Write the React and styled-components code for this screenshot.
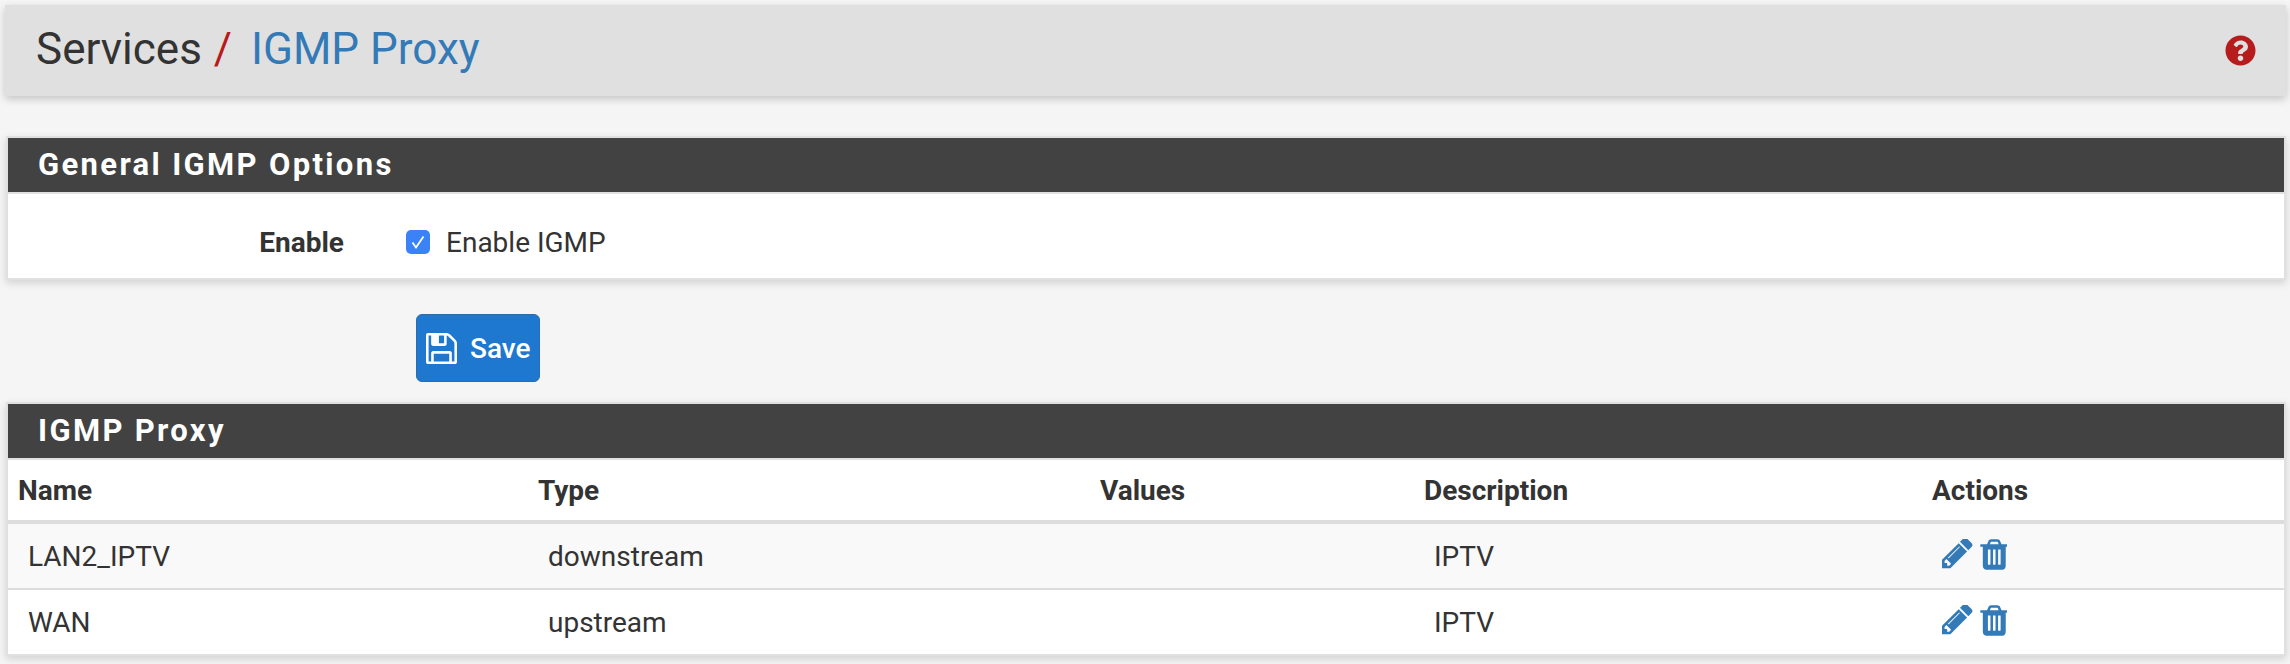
import React from "react";
import styled, { createGlobalStyle } from "styled-components";
import { FaQuestionCircle } from "react-icons/fa";

const GlobalStyle = createGlobalStyle`
  html, body {
    margin: 0;
    background: #f5f5f5;
    font-family: Roboto, "Liberation Sans", sans-serif;
    color: #333;
  }
`;

const Page = styled.div`
  width: 2290px;
  height: 664px;
  padding: 5px 4px 0 5px;
  box-sizing: border-box;
  overflow: hidden;
`;

const Header = styled.div`
  display: flex;
  align-items: center;
  justify-content: space-between;
  height: 91px;
  padding: 0 30px 0 31px;
  background: #e0e0e0;
  box-shadow: 0 3px 8px rgba(0, 0, 0, 0.2);
`;

const Crumbs = styled.h1`
  margin: 0 0 3px;
  font-size: 44px;
  font-weight: 400;
  display: flex;
  gap: 12px;
`;

const Slash = styled.span`
  color: #b71c1c;
`;

const CrumbLink = styled.span`
  color: #337ab7;
  margin-left: 7px;
`;

const HelpIcon = styled(FaQuestionCircle)`
  color: #b71c1c;
  font-size: 31px;
  display: block;
`;

const Panel = styled.section`
  background: #fff;
  border: 2px solid #e0e0e0;
  box-shadow: 0 3px 8px rgba(0, 0, 0, 0.15);
  margin: ${(p) => p.$top}px 0 0 1px;
`;

const PanelHeading = styled.h2`
  margin: 0;
  height: 54px;
  line-height: 54px;
  padding-left: 30px;
  background: #424242;
  color: #fff;
  font-size: 31px;
  font-weight: 700;
  letter-spacing: 2.35px;
  border-bottom: 2px solid #e0e0e0;
`;

const FormRow = styled.div`
  display: flex;
  align-items: center;
  height: 84px;
  padding-top: 12px;
  box-sizing: border-box;
`;

const FormLabel = styled.label`
  width: 336px;
  text-align: right;
  font-size: 28px;
  font-weight: 700;
`;

const CheckLabel = styled.label`
  display: flex;
  align-items: center;
  margin-left: 62px;
  gap: 16px;
  font-size: 28px;
`;

const CheckBox = styled.span`
  width: 24px;
  height: 24px;
  border-radius: 5px;
  background: #3b82f6;
  display: flex;
  align-items: center;
  justify-content: center;
`;

const SaveRow = styled.div`
  padding: 34px 0 0 411px;
`;

const SaveButton = styled.button`
  display: flex;
  align-items: center;
  gap: 13px;
  width: 124px;
  height: 68px;
  padding: 0 0 0 9px;
  box-sizing: border-box;
  background: #1e78d0;
  border: 1px solid #2d6ca8;
  border-radius: 6px;
  color: #fff;
  font-family: inherit;
  font-size: 28px;
  font-weight: 500;
`;

const Table = styled.table`
  width: 100%;
  border-collapse: collapse;
  table-layout: fixed;
`;

const Th = styled.th`
  width: ${(p) => p.$w}px;
  box-sizing: border-box;
  height: 62px;
  padding: 0 0 0 10px;
  text-align: left;
  font-size: 28px;
  font-weight: 700;
  border-bottom: 4px solid #ddd;
`;

const Td = styled.td`
  height: 64px;
  padding: 0 0 0 20px;
  font-size: 28px;
  background: ${(p) => (p.$odd ? "#f9f9f9" : "#fff")};
  border-bottom: ${(p) => (p.$last ? "none" : "2px solid #ddd")};
`;

const Actions = styled.div`
  display: flex;
  align-items: center;
  gap: 6px;
  color: #337ab7;
  margin-top: -4px;
`;

function SaveIcon() {
  return (
    <svg width="31" height="31" viewBox="128 128 1536 1536" fill="currentColor">
      <path d="M512 1536h768v-384h-768v384zm896 0h128v-896q0-14-10-38.500t-20-34.500l-281-281q-10-10-34-20t-39-10v416q0 40-28 68t-68 28h-576q-40 0-68-28t-28-68v-416h-128v1280h128v-416q0-40 28-68t68-28h832q40 0 68 28t28 68v416zm-384-928v-320q0-13-9.500-22.500t-22.500-9.500h-192q-13 0-22.500 9.500t-9.500 22.500v320q0 13 9.500 22.500t22.500 9.500h192q13 0 22.500-9.500t9.500-22.500zm640 32v928q0 40-28 68t-68 28h-1344q-40 0-68-28t-28-68v-1344q0-40 28-68t68-28h928q40 0 88 20t76 48l280 280q28 28 48 76t20 88z" />
    </svg>
  );
}

function PencilIcon() {
  return (
    <svg width="31" height="30" viewBox="128 250 1543 1414" fill="currentColor">
      <path d="M491 1536l91-91-235-235-91 91v107h128v128h107zm523-928q0-22-22-22-10 0-17 7l-542 542q-7 7-7 17 0 22 22 22 10 0 17-7l542-542q7-7 7-17zm-54-192l416 416-832 832h-416v-416zm683 96q0 53-37 90l-166 166-416-416 166-165q36-38 90-38 53 0 91 38l235 234q37 39 37 91z" />
    </svg>
  );
}

function TrashIcon() {
  return (
    <svg width="28" height="31" viewBox="128 128 1408 1536" fill="currentColor">
      <path d="M704 1376v-704q0-14-9-23t-23-9h-64q-14 0-23 9t-9 23v704q0 14 9 23t23 9h64q14 0 23-9t9-23zm256 0v-704q0-14-9-23t-23-9h-64q-14 0-23 9t-9 23v704q0 14 9 23t23 9h64q14 0 23-9t9-23zm256 0v-704q0-14-9-23t-23-9h-64q-14 0-23 9t-9 23v704q0 14 9 23t23 9h64q14 0 23-9t9-23zm-544-992h448l-48-117q-7-9-17-11h-317q-10 2-17 11zm928 32v64q0 14-9 23t-23 9h-96v948q0 83-47 143.500t-113 60.500h-832q-66 0-113-58.500t-47-141.500v-952h-96q-14 0-23-9t-9-23v-64q0-14 9-23t23-9h309l70-167q15-37 54-63t79-26h320q40 0 79 26t54 63l70 167h309q14 0 23 9t9 23z" />
    </svg>
  );
}

const columns = [
  { label: "Name", w: 520 },
  { label: "Type", w: 562 },
  { label: "Values", w: 324 },
  { label: "Description", w: 508 },
  { label: "Actions" },
];

const rows = [
  { name: "LAN2_IPTV", type: "downstream", desc: "IPTV" },
  { name: "WAN", type: "upstream", desc: "IPTV" },
];

export default function App() {
  return (
    <Page>
      <GlobalStyle />
      <Header>
        <Crumbs>
          <span>Services</span>
          <Slash>/</Slash>
          <CrumbLink>IGMP Proxy</CrumbLink>
        </Crumbs>
        <HelpIcon />
      </Header>

      <Panel $top={40}>
        <PanelHeading>General IGMP Options</PanelHeading>
        <FormRow>
          <FormLabel>Enable</FormLabel>
          <CheckLabel>
            <CheckBox>
              <svg width="16" height="16" viewBox="0 0 16 16" fill="none">
                <path d="M2.500 8.500l3.500 5L13.500 2.500" stroke="#fff" strokeWidth="1.800" />
              </svg>
            </CheckBox>
            Enable IGMP
          </CheckLabel>
        </FormRow>
      </Panel>

      <SaveRow>
        <SaveButton>
          <SaveIcon />
          Save
        </SaveButton>
      </SaveRow>

      <Panel $top={20}>
        <PanelHeading>IGMP Proxy</PanelHeading>
        <Table>
          <thead>
            <tr>
              {columns.map((c) => (
                <Th key={c.label} $w={c.w}>
                  {c.label}
                </Th>
              ))}
            </tr>
          </thead>
          <tbody>
            {rows.map((r, i) => {
              const odd = i === 0;
              const last = i === rows.length - 1;
              return (
                <tr key={r.name}>
                  <Td $odd={odd} $last={last}>{r.name}</Td>
                  <Td $odd={odd} $last={last}>{r.type}</Td>
                  <Td $odd={odd} $last={last} />
                  <Td $odd={odd} $last={last}>{r.desc}</Td>
                  <Td $odd={odd} $last={last}>
                    <Actions>
                      <PencilIcon />
                      <TrashIcon />
                    </Actions>
                  </Td>
                </tr>
              );
            })}
          </tbody>
        </Table>
      </Panel>
    </Page>
  );
}
